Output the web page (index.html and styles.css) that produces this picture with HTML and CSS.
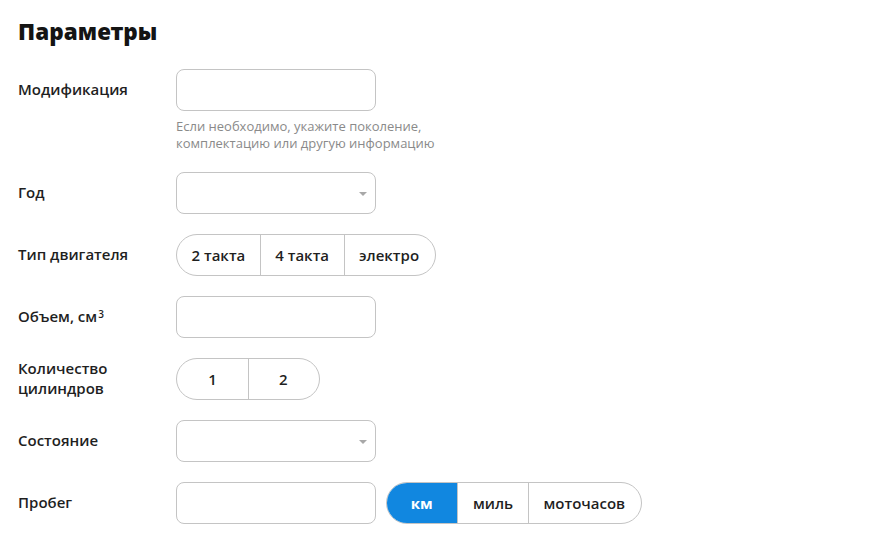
FILE: index.html
```html
<!DOCTYPE html>
<html lang="ru">
<head>
<meta charset="utf-8">
<link rel="stylesheet" href="styles.css">
</head>
<body>
<div class="page">
  <h1 class="title">Параметры</h1>
  <div class="form">
    <div class="row">
      <div class="label">Модификация</div>
      <div class="field">
        <div class="input"></div>
        <div class="hint">Если необходимо, укажите поколение,<br>комплектацию или другую информацию</div>
      </div>
    </div>
    <div class="row">
      <div class="label">Год</div>
      <div class="field"><div class="input select"><span class="arrow"></span></div></div>
    </div>
    <div class="row">
      <div class="label">Тип двигателя</div>
      <div class="field">
        <div class="seg">
          <span class="opt">2 такта</span><span class="opt">4 такта</span><span class="opt">электро</span>
        </div>
      </div>
    </div>
    <div class="row">
      <div class="label">Объем, см<sup class="sup">3</sup></div>
      <div class="field"><div class="input"></div></div>
    </div>
    <div class="row">
      <div class="label">Количество<br>цилиндров</div>
      <div class="field">
        <div class="seg">
          <span class="opt num">1</span><span class="opt num">2</span>
        </div>
      </div>
    </div>
    <div class="row">
      <div class="label">Состояние</div>
      <div class="field"><div class="input select"><span class="arrow"></span></div></div>
    </div>
    <div class="row">
      <div class="label">Пробег</div>
      <div class="field inline">
        <div class="input"></div>
        <div class="seg">
          <span class="opt active">км</span><span class="opt">миль</span><span class="opt">моточасов</span>
        </div>
      </div>
    </div>
  </div>
</div>
</body>
</html>
```

FILE: styles.css
```css
* { box-sizing: border-box; }
html, body { margin: 0; padding: 0; background: #fff; }
body {
  font-family: "Open Sans", "Noto Sans", sans-serif;
  color: #1f1f1f;
}
.page { padding: 18px 18px; }
.title {
  margin: 0 0 23px 0;
  font-family: "Noto Sans", "Open Sans", sans-serif;
  font-weight: 900;
  font-size: 22.5px;
  line-height: 28px;
  letter-spacing: 0.1px;
  color: #141414;
}
.form { display: flex; flex-direction: column; gap: 20px; }
.row { display: flex; align-items: flex-start; }
.label {
  width: 158px;
  flex: none;
  font-size: 15px;
  font-weight: 600;
  line-height: 20px;
  min-height: 42px;
  padding-bottom: 2px;
  display: flex;
  align-items: center;
}
.sup { font-size: 10px; line-height: 0; position: relative; top: -2px; vertical-align: super; margin-left: 1px; }
.field { display: flex; flex-direction: column; }
.field.inline { flex-direction: row; gap: 10px; }
.input {
  width: 200px;
  height: 42px;
  border: 1px solid #c4c4c4;
  border-radius: 8px;
  background: #fff;
  position: relative;
}
.select .arrow {
  position: absolute;
  right: 8px;
  top: 19px;
  width: 0; height: 0;
  border-left: 4px solid transparent;
  border-right: 4px solid transparent;
  border-top: 4px solid #a8a8a8;
}
.hint {
  margin-top: 7px;
  font-size: 13px;
  line-height: 17px;
  color: #8a8a8a;
}
.seg {
  display: flex;
  height: 42px;
  border: 1px solid #c4c4c4;
  border-radius: 21px;
  overflow: hidden;
}
.opt {
  display: flex;
  align-items: center;
  justify-content: center;
  padding: 0 14.5px;
  min-width: 71px;
  font-size: 15px;
  font-weight: 600;
  color: #1f1f1f;
  border-left: 1px solid #c4c4c4;
}
.opt:first-child { border-left: none; }
.opt:last-child { padding-right: 16px; }
.opt.num { min-width: 71px; }
.opt.active {
  background: #1187e0;
  color: #fff;
  font-weight: 700;
  margin: -1px 0 -1px -1px;
  padding-left: 15px;
}
```
